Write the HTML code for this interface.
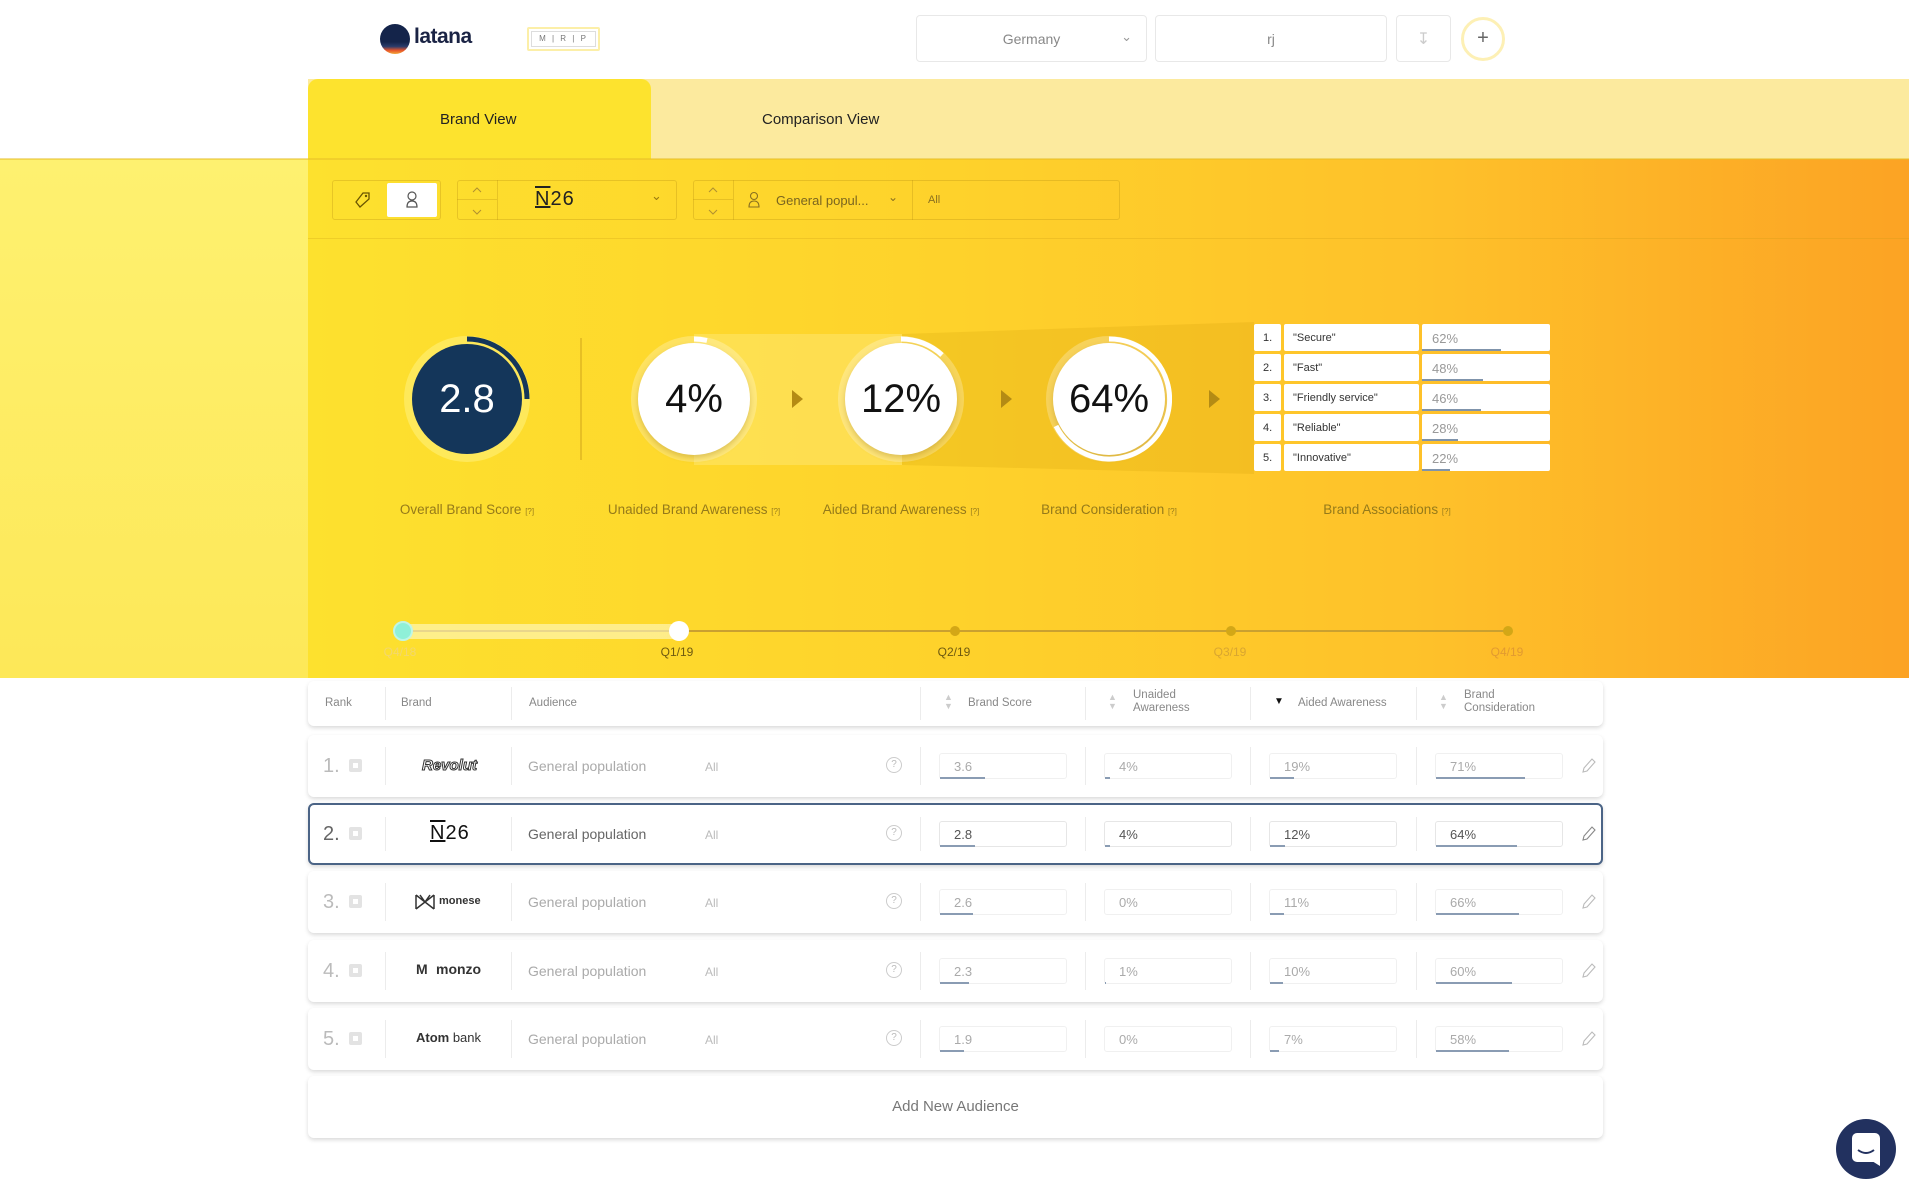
<!DOCTYPE html>
<html><head><meta charset="utf-8"><style>
*{box-sizing:border-box;margin:0;padding:0}
body{width:1909px;height:1199px;position:relative;overflow:hidden;background:#fff;font-family:"Liberation Sans",sans-serif;color:#555}
.a{position:absolute}
.box{position:absolute;background:#fff;border:1px solid #e8e8e8;border-radius:4px;color:#888;font-size:14px;display:flex;align-items:center;justify-content:center}
.fb{position:absolute;border:1px solid rgba(190,150,20,.35);border-radius:3px}
.circ{position:absolute;width:126px;height:126px;border-radius:50%;background:rgba(255,255,255,.25);display:flex;align-items:center;justify-content:center}
.inner{width:112px;height:112px;border-radius:50%;background:#fff;display:flex;align-items:center;justify-content:center;font-size:40px;color:#111;font-weight:300;box-shadow:0 3px 6px rgba(150,110,0,.3)}
.lbl{position:absolute;top:502px;font-size:13.5px;color:#957a1a;text-align:center;width:220px}
.lbl small{font-size:8px}
.arrow{position:absolute;top:390px;width:0;height:0;border-top:9px solid transparent;border-bottom:9px solid transparent;border-left:11px solid #b48b14}
.asn{position:absolute;left:1254px;width:27px;height:27px;background:#fff;border-radius:2px;font-size:11px;color:#333;padding:8px 0 0 9px}
.asl{position:absolute;left:1284px;width:135px;height:27px;background:#fff;border-radius:2px;font-size:11px;color:#333;padding:8px 0 0 9px}
.asv{position:absolute;left:1422px;width:128px;height:27px;background:#fff;border-radius:2px;font-size:13px;color:#999;padding:7px 0 0 10px}
.asv i{position:absolute;left:0;bottom:0;height:2px;background:#7f93ab}
.tick{position:absolute;top:626px;width:10px;height:10px;border-radius:50%;background:#d3a716}
.tl{position:absolute;top:645px;font-size:12px;color:#6f5a10;width:60px;text-align:center}
.card{position:absolute;left:308px;width:1295px;background:#fff;border-radius:6px;box-shadow:0 2px 4px rgba(0,0,0,.15)}
.row{height:62px}
.vl{position:absolute;top:12px;bottom:12px;width:1px;background:#ececec}
.rk{position:absolute;left:15px;top:20px;font-size:20px;color:#bbb;font-weight:300}
.cb{position:absolute;left:41px;top:24px;width:13px;height:13px;background:#e3e3e3;border-radius:2px}
.cb:after{content:"";position:absolute;left:4px;top:4px;width:5px;height:5px;background:#fff}
.gp{position:absolute;left:220px;top:23px;font-size:14px;color:#aaa}
.all{position:absolute;left:397px;top:25px;font-size:12px;color:#bbb}
.q{position:absolute;left:578px;top:22px;width:16px;height:16px;border:1px solid #ccc;border-radius:50%;font-size:10px;color:#bbb;text-align:center;line-height:14px}
.in{position:absolute;top:18px;width:128px;height:26px;border:1px solid #f0f0f0;border-radius:3px;font-size:13px;color:#aaa;padding:5px 0 0 14px}
.in i{position:absolute;left:0;bottom:-1px;height:2px;background:#8a9cb3}
.pen{position:absolute;left:1272px;top:22px}
.hd{position:absolute;font-size:11.5px;color:#888;line-height:13px}
.sa{position:absolute;font-size:9px;color:#ccc;line-height:9px}
.sel .rk,.sel .gp{color:#666}.sel .in{color:#555;border-color:#e6e6e6}
</style></head><body>

<div class="a" style="left:380px;top:24px;width:30px;height:30px;border-radius:50%;background:linear-gradient(180deg,#14244a 60%,#2a3c6b 75%,#e8552a 88%,#f2a93a 100%)"></div>
<div class="a" style="left:414px;top:25px;font-size:21px;font-weight:bold;color:#1a2344;letter-spacing:-.5px">latana</div>
<div class="a" style="left:527px;top:27px;width:73px;height:24px;border:2px solid #fcefa8;border-radius:2px"><div style="margin:2px;height:16px;border:1px solid #ddd;font-size:8px;color:#777;text-align:center;line-height:14px;letter-spacing:2px">M | R | P</div></div>
<div class="box" style="left:916px;top:15px;width:231px;height:47px">Germany<span style="position:absolute;right:14px;top:13px;font-size:13px;color:#999">&#8964;</span></div>
<div class="box" style="left:1155px;top:15px;width:232px;height:47px">rj</div>
<div class="box" style="left:1396px;top:15px;width:55px;height:47px;color:#ccc;font-size:16px">&#8615;</div>
<div class="a" style="left:1461px;top:17px;width:44px;height:44px;border-radius:50%;border:3px solid #fdf0b5;text-align:center;line-height:37px;font-size:20px;color:#666">+</div>

<div class="a" style="left:308px;top:79px;width:1601px;height:80px;background:#fcea9e"></div>
<div class="a" style="left:308px;top:79px;width:343px;height:80px;background:#fde32e;border-radius:10px 10px 0 0"></div>
<div class="a" style="left:440px;top:111px;font-size:15px;color:#222">Brand View</div>
<div class="a" style="left:762px;top:111px;font-size:15px;color:#222">Comparison View</div>

<div class="a" style="left:0;top:159px;width:308px;height:519px;background:linear-gradient(180deg,#fef170,#fde858)"></div>
<div class="a" style="left:308px;top:159px;width:1601px;height:519px;background:linear-gradient(90deg,#fde12e 0%,#fed22b 40%,#fec12a 70%,#fca324 100%)"></div>
<div class="a" style="left:308px;top:238px;width:1601px;height:1px;background:rgba(200,150,20,.25)"></div>
<div class="a" style="left:0;top:158px;width:1909px;height:2px;background:rgba(230,190,40,.5)"></div>

<div class="fb" style="left:332px;top:180px;width:109px;height:40px"></div>
<svg class="a" style="left:352px;top:190px" width="20" height="20"><path d="M4 12 L11 3 L17 3 L17 9 L8 17 Z" fill="none" stroke="#6a5500" stroke-width="1.3"/><circle cx="14" cy="6" r="1.2" fill="#6a5500"/></svg>
<div class="a" style="left:387px;top:183px;width:50px;height:34px;background:#fff;border-radius:2px"></div>
<svg class="a" style="left:404px;top:190px" width="16" height="20"><circle cx="8" cy="6" r="4" fill="none" stroke="#555" stroke-width="1.2"/><path d="M3 17 Q3 11 8 11 Q13 11 13 17 Z" fill="none" stroke="#555" stroke-width="1.2"/></svg>
<div class="fb" style="left:457px;top:180px;width:220px;height:40px"></div>
<div class="a" style="left:497px;top:180px;width:1px;height:40px;background:rgba(190,150,20,.35)"></div>
<div class="a" style="left:457px;top:199px;width:40px;height:1px;background:rgba(190,150,20,.35)"></div>
<svg class="a" style="left:471px;top:184px" width="12" height="34"><path d="M2 8 L6 4 L10 8 M2 26 L6 30 L10 26" fill="none" stroke="#b09030" stroke-width="1"/></svg>
<div class="a" style="left:535px;top:188px;font-size:20px;color:#222;letter-spacing:1px"><span style="text-decoration:overline underline">N</span>26</div>
<div class="a" style="left:651px;top:188px;font-size:13px;color:#9a7a10">&#8964;</div>
<div class="fb" style="left:693px;top:180px;width:427px;height:40px"></div>
<div class="a" style="left:733px;top:180px;width:1px;height:40px;background:rgba(190,150,20,.35)"></div>
<div class="a" style="left:912px;top:180px;width:1px;height:40px;background:rgba(190,150,20,.35)"></div>
<div class="a" style="left:693px;top:199px;width:40px;height:1px;background:rgba(190,150,20,.35)"></div>
<svg class="a" style="left:707px;top:184px" width="12" height="34"><path d="M2 8 L6 4 L10 8 M2 26 L6 30 L10 26" fill="none" stroke="#b09030" stroke-width="1"/></svg>
<svg class="a" style="left:747px;top:191px" width="14" height="18"><circle cx="7" cy="5" r="3.5" fill="none" stroke="#8a7020" stroke-width="1.1"/><path d="M2 16 Q2 10 7 10 Q12 10 12 16 Z" fill="none" stroke="#8a7020" stroke-width="1.1"/></svg>
<div class="a" style="left:776px;top:193px;font-size:13px;color:#7a6520">General popul...</div>
<div class="a" style="left:888px;top:190px;font-size:12px;color:#8a7020">&#8964;</div>
<div class="a" style="left:928px;top:194px;font-size:11px;color:#8a7020">All</div>

<svg class="a" style="left:0;top:0" width="1909" height="700">
<rect x="694" y="334" width="208" height="131" fill="rgba(255,240,150,.35)"/>
<polygon points="902,334 1254,322 1254,474 902,465" fill="rgba(200,150,0,.18)"/>
<line x1="581" y1="338" x2="581" y2="460" stroke="rgba(190,140,20,.35)" stroke-width="2"/>
<line x1="403" y1="631" x2="1508" y2="631" stroke="#c9a030" stroke-width="2"/>
<rect x="403" y="624" width="276" height="15" rx="7" fill="rgba(255,250,200,.6)"/>
</svg>

<div class="a" style="left:404px;top:336px;width:126px;height:126px;border-radius:50%;background:rgba(255,240,120,.6)"></div>
<div class="a" style="left:412px;top:344px;width:110px;height:110px;border-radius:50%;background:#14365a;color:#fff;font-size:40px;font-weight:300;text-align:center;line-height:110px">2.8</div>
<svg class="a" style="left:404px;top:336px" width="126" height="126"><path d="M63 3 A60 60 0 0 1 123 63" fill="none" stroke="#14365a" stroke-width="5"/></svg>
<div class="lbl" style="left:357px">Overall Brand Score <small>[?]</small></div>

<div class="circ" style="left:631px;top:336px"><div class="inner">4%</div></div>
<svg class="a" style="left:631px;top:336px" width="126" height="126"><path d="M63 3 A60 60 0 0 1 76 4.5" fill="none" stroke="#fff" stroke-width="5"/></svg>
<div class="lbl" style="left:584px">Unaided Brand Awareness <small>[?]</small></div>
<div class="arrow" style="left:792px"></div>

<div class="circ" style="left:838px;top:336px"><div class="inner">12%</div></div>
<svg class="a" style="left:838px;top:336px" width="126" height="126"><path d="M63 3 A60 60 0 0 1 104 19" fill="none" stroke="#fff" stroke-width="5"/></svg>
<div class="lbl" style="left:791px">Aided Brand Awareness <small>[?]</small></div>
<div class="arrow" style="left:1001px"></div>

<div class="circ" style="left:1046px;top:336px"><div class="inner">64%</div></div>
<svg class="a" style="left:1046px;top:336px" width="126" height="126"><path d="M63 3 A60 60 0 1 1 10 90" fill="none" stroke="#fff" stroke-width="5"/></svg>
<div class="lbl" style="left:999px">Brand Consideration <small>[?]</small></div>
<div class="arrow" style="left:1209px"></div>

<div class="asn" style="top:324px">1.</div><div class="asl" style="top:324px">"Secure"</div><div class="asv" style="top:324px">62%<i style="width:62%"></i></div>
<div class="asn" style="top:354px">2.</div><div class="asl" style="top:354px">"Fast"</div><div class="asv" style="top:354px">48%<i style="width:48%"></i></div>
<div class="asn" style="top:384px">3.</div><div class="asl" style="top:384px">"Friendly service"</div><div class="asv" style="top:384px">46%<i style="width:46%"></i></div>
<div class="asn" style="top:414px">4.</div><div class="asl" style="top:414px">"Reliable"</div><div class="asv" style="top:414px">28%<i style="width:28%"></i></div>
<div class="asn" style="top:444px">5.</div><div class="asl" style="top:444px">"Innovative"</div><div class="asv" style="top:444px">22%<i style="width:22%"></i></div>
<div class="lbl" style="left:1277px">Brand Associations <small>[?]</small></div>

<div class="a" style="left:393px;top:621px;width:20px;height:20px;border-radius:50%;background:#8ff0d8;border:2px solid #bff5e6"></div>
<div class="a" style="left:669px;top:621px;width:20px;height:20px;border-radius:50%;background:#fff"></div>
<div class="tick" style="left:950px"></div><div class="tick" style="left:1226px"></div><div class="tick" style="left:1503px"></div>
<div class="tl" style="left:370px;color:#f3d76e">Q4/18</div>
<div class="tl" style="left:647px">Q1/19</div>
<div class="tl" style="left:924px">Q2/19</div>
<div class="tl" style="left:1200px;color:#d9a630">Q3/19</div>
<div class="tl" style="left:1477px;color:#e29a30">Q4/19</div>

<div class="card" style="top:681px;height:45px">
<div class="vl" style="left:77px;top:6px;bottom:6px"></div><div class="vl" style="left:203px;top:6px;bottom:6px"></div><div class="vl" style="left:612px;top:6px;bottom:6px"></div><div class="vl" style="left:777px;top:6px;bottom:6px"></div><div class="vl" style="left:942px;top:6px;bottom:6px"></div><div class="vl" style="left:1108px;top:6px;bottom:6px"></div>
<div class="hd" style="left:17px;top:16px">Rank</div>
<div class="hd" style="left:93px;top:16px">Brand</div>
<div class="hd" style="left:221px;top:16px">Audience</div>
<div class="sa" style="left:636px;top:12px">&#9650;<br>&#9660;</div><div class="hd" style="left:660px;top:16px">Brand Score</div>
<div class="sa" style="left:800px;top:12px">&#9650;<br>&#9660;</div><div class="hd" style="left:825px;top:8px">Unaided<br>Awareness</div>
<div class="a" style="left:966px;top:15px;font-size:10px;color:#111">&#9660;</div><div class="hd" style="left:990px;top:16px">Aided Awareness</div>
<div class="sa" style="left:1131px;top:12px">&#9650;<br>&#9660;</div><div class="hd" style="left:1156px;top:8px">Brand<br>Consideration</div>
</div>

<div class="card row" style="top:735px">
<div class="vl" style="left:77px"></div><div class="vl" style="left:203px"></div><div class="vl" style="left:612px"></div><div class="vl" style="left:777px"></div><div class="vl" style="left:942px"></div><div class="vl" style="left:1108px"></div>
<div class="rk">1.</div><div class="cb"></div>
<div class="a" style="left:114px;top:22px;font-size:15px;font-weight:bold;font-style:italic;color:#fff;-webkit-text-stroke:1px #333">Revolut</div>
<div class="gp">General population</div><div class="all">All</div><div class="q">?</div>
<div class="in" style="left:631px">3.6<i style="width:36%"></i></div>
<div class="in" style="left:796px">4%<i style="width:4%"></i></div>
<div class="in" style="left:961px">19%<i style="width:19%"></i></div>
<div class="in" style="left:1127px">71%<i style="width:71%"></i></div>
<svg class="pen" width="16" height="18"><path d="M3 15 L4 11 L12 2 L15 5 L7 14 Z" fill="none" stroke="#bbb" stroke-width="1.1"/></svg>
</div>

<div class="card row sel" style="top:803px;border:2px solid #4b6486">
<div class="vl" style="left:75px"></div><div class="vl" style="left:201px"></div><div class="vl" style="left:610px"></div><div class="vl" style="left:775px"></div><div class="vl" style="left:940px"></div><div class="vl" style="left:1106px"></div>
<div class="rk" style="left:13px;top:18px">2.</div><div class="cb" style="left:39px;top:22px"></div>
<div class="a" style="left:120px;top:17px;font-size:20px;color:#111;letter-spacing:1px"><span style="text-decoration:overline underline">N</span>26</div>
<div class="gp" style="left:218px;top:21px">General population</div><div class="all" style="left:395px;top:23px">All</div><div class="q" style="left:576px;top:20px">?</div>
<div class="in" style="left:629px;top:16px">2.8<i style="width:28%"></i></div>
<div class="in" style="left:794px;top:16px">4%<i style="width:4%"></i></div>
<div class="in" style="left:959px;top:16px">12%<i style="width:12%"></i></div>
<div class="in" style="left:1125px;top:16px">64%<i style="width:64%"></i></div>
<svg class="pen" style="left:1270px;top:20px" width="16" height="18"><path d="M3 15 L4 11 L12 2 L15 5 L7 14 Z" fill="none" stroke="#888" stroke-width="1.1"/></svg>
</div>

<div class="card row" style="top:871px">
<div class="vl" style="left:77px"></div><div class="vl" style="left:203px"></div><div class="vl" style="left:612px"></div><div class="vl" style="left:777px"></div><div class="vl" style="left:942px"></div><div class="vl" style="left:1108px"></div>
<div class="rk">3.</div><div class="cb"></div>
<svg class="a" style="left:106px;top:22px" width="22" height="18"><path d="M2 2 L20 16 M20 2 L2 16 M2 2 L2 16 M20 2 L20 16 M11 9 L6 2 M11 9 L16 2" fill="none" stroke="#333" stroke-width="1.5"/></svg><div class="a" style="left:131px;top:24px;font-size:11px;font-weight:bold;color:#333">monese</div>
<div class="gp">General population</div><div class="all">All</div><div class="q">?</div>
<div class="in" style="left:631px">2.6<i style="width:26%"></i></div>
<div class="in" style="left:796px">0%</div>
<div class="in" style="left:961px">11%<i style="width:11%"></i></div>
<div class="in" style="left:1127px">66%<i style="width:66%"></i></div>
<svg class="pen" width="16" height="18"><path d="M3 15 L4 11 L12 2 L15 5 L7 14 Z" fill="none" stroke="#bbb" stroke-width="1.1"/></svg>
</div>

<div class="card row" style="top:940px">
<div class="vl" style="left:77px"></div><div class="vl" style="left:203px"></div><div class="vl" style="left:612px"></div><div class="vl" style="left:777px"></div><div class="vl" style="left:942px"></div><div class="vl" style="left:1108px"></div>
<div class="rk">4.</div><div class="cb"></div>
<div class="a" style="left:108px;top:21px;font-size:14px;font-weight:bold;color:#333">M</div><div class="a" style="left:128px;top:21px;font-size:14px;font-weight:bold;color:#333">monzo</div>
<div class="gp">General population</div><div class="all">All</div><div class="q">?</div>
<div class="in" style="left:631px">2.3<i style="width:23%"></i></div>
<div class="in" style="left:796px">1%<i style="width:1%"></i></div>
<div class="in" style="left:961px">10%<i style="width:10%"></i></div>
<div class="in" style="left:1127px">60%<i style="width:60%"></i></div>
<svg class="pen" width="16" height="18"><path d="M3 15 L4 11 L12 2 L15 5 L7 14 Z" fill="none" stroke="#bbb" stroke-width="1.1"/></svg>
</div>

<div class="card row" style="top:1008px">
<div class="vl" style="left:77px"></div><div class="vl" style="left:203px"></div><div class="vl" style="left:612px"></div><div class="vl" style="left:777px"></div><div class="vl" style="left:942px"></div><div class="vl" style="left:1108px"></div>
<div class="rk">5.</div><div class="cb"></div>
<div class="a" style="left:108px;top:22px;font-size:13px;color:#333"><b>Atom</b> bank</div>
<div class="gp">General population</div><div class="all">All</div><div class="q">?</div>
<div class="in" style="left:631px">1.9<i style="width:19%"></i></div>
<div class="in" style="left:796px">0%</div>
<div class="in" style="left:961px">7%<i style="width:7%"></i></div>
<div class="in" style="left:1127px">58%<i style="width:58%"></i></div>
<svg class="pen" width="16" height="18"><path d="M3 15 L4 11 L12 2 L15 5 L7 14 Z" fill="none" stroke="#bbb" stroke-width="1.1"/></svg>
</div>

<div class="card" style="top:1076px;height:62px;text-align:center;line-height:62px;font-size:15px;color:#777">Add New Audience</div>

<div class="a" style="left:1836px;top:1119px;width:60px;height:60px;border-radius:50%;background:#22315f"></div>
<div class="a" style="left:1852px;top:1133px;width:28px;height:29px;background:#fff;border-radius:5px 5px 2px 5px"></div>
<svg class="a" style="left:1852px;top:1133px" width="32" height="34"><path d="M6 17 Q14 23 22 17" fill="none" stroke="#22315f" stroke-width="2"/><path d="M20 28 L28 33 L28 26 Z" fill="#fff"/></svg>
</body></html>
